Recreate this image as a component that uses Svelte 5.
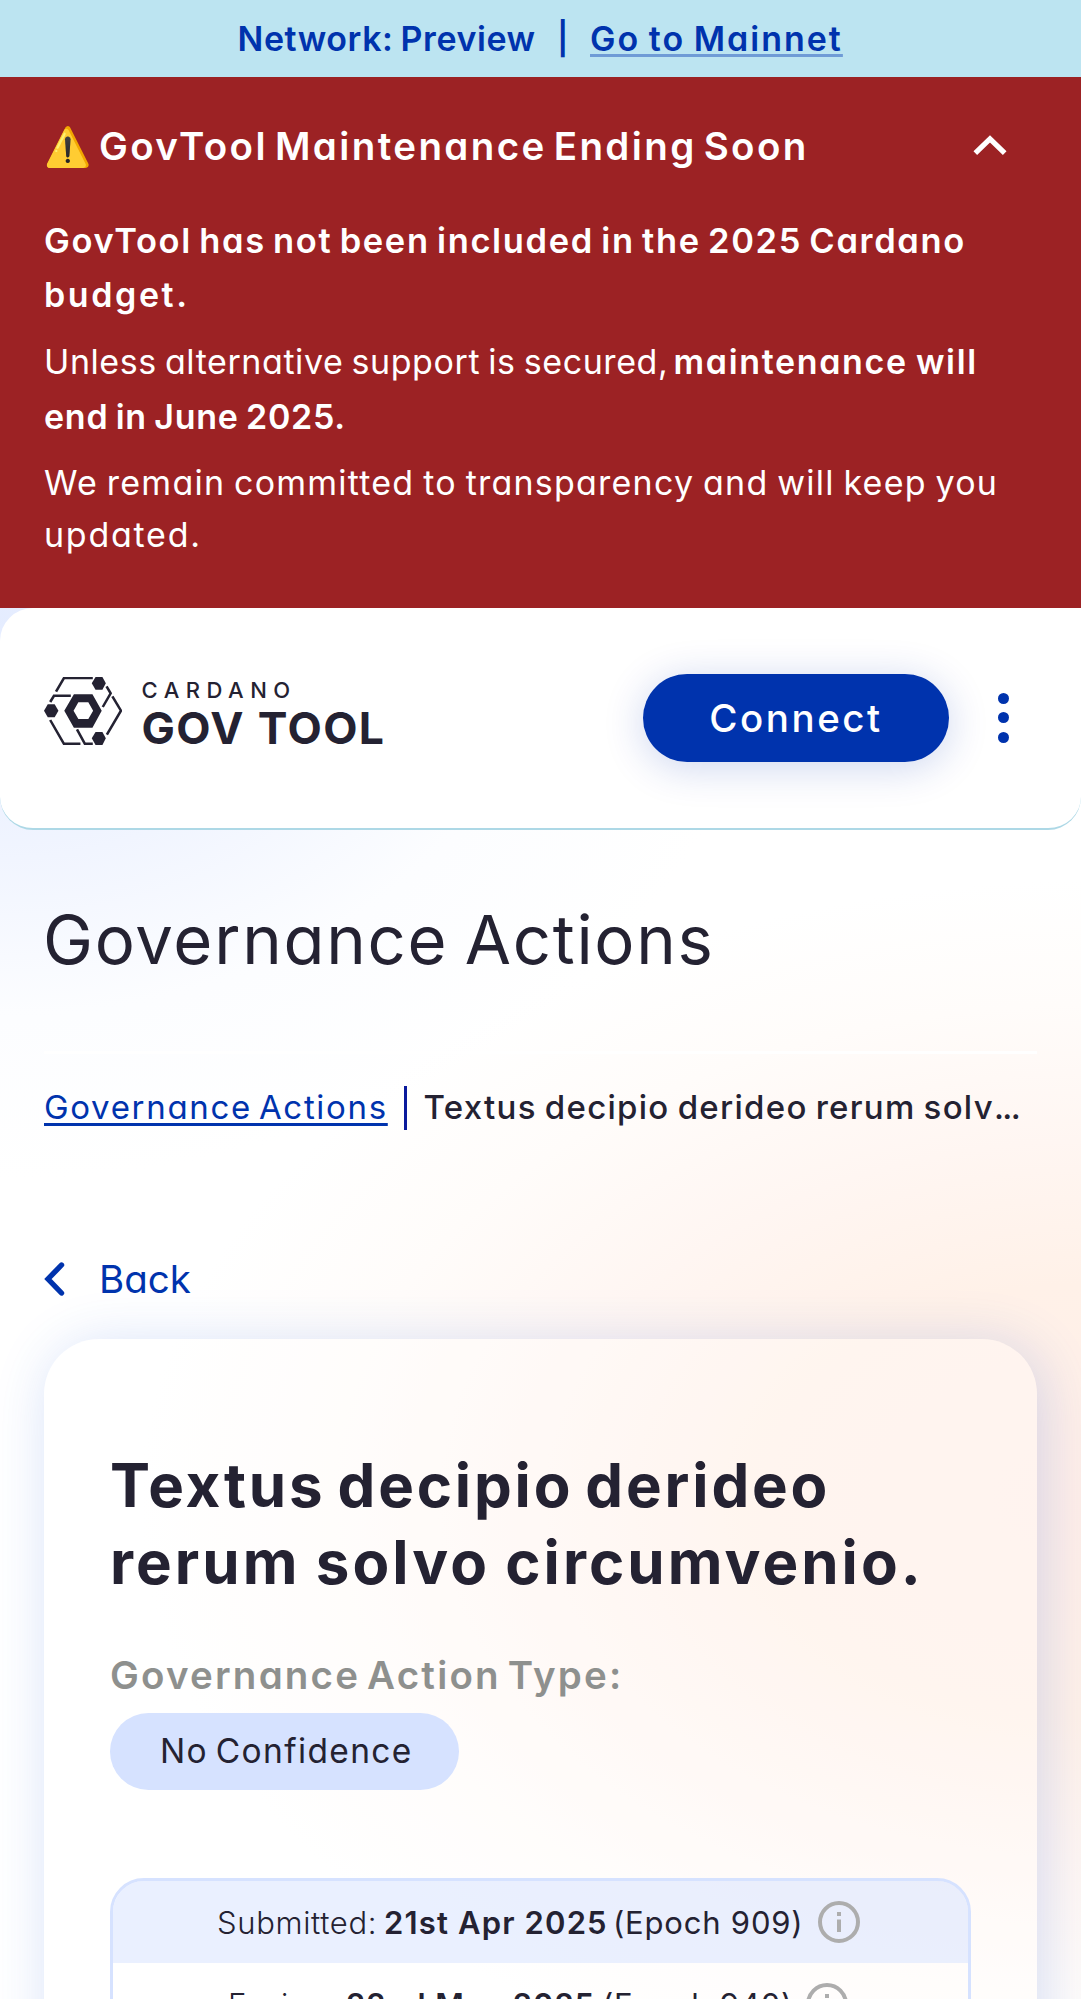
<script>
  const rows = [
    { label: 'Submitted:', date: '21st Apr 2025', epoch: '(Epoch 909)', kind: 'submitted' },
    { label: 'Expires:', date: '22nd May 2025', epoch: '(Epoch 940)', kind: 'expires' }
  ];
</script>

<div class="app">
  <div class="network">
    <span class="net-name">Network: Preview</span>
    <span class="net-sep">|</span>
    <a class="net-link" href="#mainnet">Go to Mainnet</a>
  </div>

  <section class="alert">
    <div class="alert-head">
      <span class="emoji">⚠️</span>
      <h2>GovTool Maintenance Ending Soon</h2>
      <svg class="chev-up" viewBox="0 0 34 21"><path d="M2.3 18.2 17 3.8l14.7 14.4" /></svg>
    </div>
    <p class="p1">
      <b class="a1">GovTool has not been included in the 2025 Cardano</b><br />
      <b class="a2">budget.</b>
    </p>
    <p class="p2">
      <span class="a3">Unless alternative support is secured,</span><b class="a4">maintenance will</b><br />
      <b class="a5">end in June 2025.</b>
    </p>
    <p class="p3">
      <span class="a6">We remain committed to transparency and will keep you</span><br />
      <span class="a7">updated.</span>
    </p>
  </section>

  <header>
    <div class="logo">
      <svg class="mark" viewBox="128 231 227 204" preserveAspectRatio="none">
        <path
          class="solid"
          fill-rule="evenodd"
          d="M187 332 215 283H269L296 332 269 383H215ZM214 332 228 357H257L271 332 257 307H228Z"
        />
        <path class="solid" d="M267 250 278 231H298L308 250 298 269H278Z" />
        <path class="solid" d="M128 332 139 313H159L170 332 159 352H139Z" />
        <path class="solid" d="M267 415 278 396H298L308 415 298 435H278Z" />
        <path
          class="line"
          d="M163 275 186 234.3H270M146 306 157 287.5H206M146 360 186 431.5H234M224 388 247 431.5H270M310 259 322 280 299 321M327 289 352 332 311 404"
        />
      </svg>
      <div class="logo-text">
        <span class="logo-top">CARDANO</span>
        <span class="logo-bottom">GOV TOOL</span>
      </div>
    </div>
    <div class="actions">
      <button class="connect">Connect</button>
      <div class="dots"><i></i><i></i><i></i></div>
    </div>
  </header>

  <main>
    <h1>Governance Actions</h1>
    <div class="divider"></div>
    <nav class="crumbs">
      <a href="#actions">Governance Actions</a>
      <span class="bar"></span>
      <span class="current">Textus decipio derideo rerum solv<span class="dots3">...</span></span>
    </nav>
    <div class="back">
      <svg viewBox="0 0 21 34"><path d="M17.5 3 4 17l13.5 14" /></svg>
      <span>Back</span>
    </div>

    <article class="card">
      <h3>
        <span class="t1">Textus decipio derideo</span><br />
        <span class="t2">rerum solvo circumvenio.</span>
      </h3>
      <div class="type-label">Governance Action Type:</div>
      <div class="pill">No Confidence</div>
      <div class="dates">
        {#each rows as row}
          <div class="row {row.kind}">
            <span class="label">{row.label}</span>
            <b>{row.date}</b>
            <span class="epoch">{row.epoch}</span>
            <svg class="info" viewBox="0 0 42 42">
              <circle cx="21" cy="21" r="19" />
              <path d="M21 18.5V31M21 11v4" />
            </svg>
          </div>
        {/each}
      </div>
    </article>
  </main>
</div>

<style>
  :global(body) {
    margin: 0;
    background: #fff;
  }
  .app {
    width: 1081px;
    height: 1999px;
    overflow: hidden;
    font-family: Inter, 'Liberation Sans', sans-serif;
    font-feature-settings: 'cv11';
    font-kerning: normal;
    color: #242232;
    white-space: nowrap;
    background:
      radial-gradient(ellipse 760px 560px at 0 620px, rgba(224, 233, 255, 0.85), rgba(230, 237, 255, 0.6) 40%, rgba(246, 249, 255, 0.35) 70%, rgba(255, 255, 255, 0) 100%),
      radial-gradient(ellipse 960px 620px at 1100px 1500px, #ffeee8 0%, #fff1e8 35%, #fff6f2 58%, #fffcfa 80%, rgba(255, 255, 255, 0) 100%),
      #fff;
  }
  h1,
  h2,
  h3,
  p {
    margin: 0;
  }
  b {
    font-weight: 600;
  }

  .network {
    height: 77px;
    box-sizing: border-box;
    padding-left: 237.5px;
    display: flex;
    align-items: center;
    background: #bce4f1;
    color: #0033ad;
    font-size: 34px;
    font-weight: 600;
    line-height: 76px;
  }
  .net-name {
    width: 319.5px;
    letter-spacing: 0.56px;
    word-spacing: -2px;
  }
  .net-sep {
    width: 33px;
    font-size: 32px;
    line-height: 73px;
  }
  .net-link {
    color: inherit;
    letter-spacing: 2px;
    word-spacing: -2px;
    text-decoration: underline;
    text-decoration-color: #6f9bd6;
    text-decoration-thickness: 2.5px;
    text-underline-offset: 2.5px;
    text-decoration-skip-ink: none;
  }

  .alert {
    box-sizing: border-box;
    height: 530.5px;
    padding: 41.5px 74px 0 44px;
    background: #9c2224;
    color: #fff;
    font-size: 34px;
  }
  .alert-head {
    display: flex;
    align-items: center;
    height: 54px;
  }
  .emoji {
    width: 55px;
    font-size: 38px;
    line-height: 52px;
  }
  h2 {
    flex: 1;
    font-size: 38.5px;
    font-weight: 600;
    line-height: 54px;
    letter-spacing: 2.38px;
    word-spacing: -5px;
  }
  .chev-up {
    width: 34px;
    height: 21px;
    fill: none;
    stroke: #fff;
    stroke-width: 5.2;
  }
  .p1 {
    margin-top: 41.6px;
    line-height: 54px;
  }
  .p2 {
    margin-top: 12px;
    line-height: 55px;
  }
  .p3 {
    margin-top: 13px;
    line-height: 52px;
  }
  .a1 {
    font-size: 34.5px;
    letter-spacing: 1.64px;
    word-spacing: -3px;
  }
  .a2 {
    letter-spacing: 2.6px;
  }
  .a3 {
    display: inline-block;
    width: 629.5px;
    letter-spacing: 0.58px;
    word-spacing: -2px;
  }
  .a4 {
    letter-spacing: 1.65px;
    word-spacing: -2px;
  }
  .a5 {
    letter-spacing: 0.75px;
    word-spacing: -2px;
  }
  .a6 {
    letter-spacing: 1.23px;
    word-spacing: -2px;
  }
  .a7 {
    letter-spacing: 1.75px;
  }

  header {
    box-sizing: border-box;
    height: 222.5px;
    padding: 0 72.3px 0 44px;
    display: flex;
    align-items: center;
    justify-content: space-between;
    background: #fff;
    border-bottom: 2.5px solid #add8e6;
    border-radius: 33px;
  }
  .logo {
    display: flex;
    gap: 19.5px;
    margin-bottom: 5px;
  }
  .mark {
    width: 78px;
    height: 68px;
  }
  .solid {
    fill: #242232;
  }
  .line {
    fill: none;
    stroke: #242232;
    stroke-width: 7.4;
  }
  .logo-text {
    display: flex;
    flex-direction: column;
  }
  .logo-top {
    font-size: 22px;
    font-weight: 500;
    line-height: 26px;
    letter-spacing: 6.5px;
  }
  .logo-bottom {
    font-size: 44.5px;
    font-weight: 700;
    line-height: 50px;
    letter-spacing: 1.4px;
    word-spacing: 1px;
  }
  .actions {
    display: flex;
    align-items: center;
  }
  .connect {
    width: 305.5px;
    height: 88.5px;
    padding: 0;
    border: 0;
    border-radius: 45px;
    background: #0033ad;
    color: #fff;
    font: inherit;
    font-size: 38.5px;
    font-weight: 500;
    letter-spacing: 2.5px;
    box-shadow: 0 5.5px 42px rgba(0, 51, 173, 0.2);
  }
  .dots {
    margin-left: 49px;
    display: flex;
    flex-direction: column;
    gap: 8.4px;
  }
  .dots i {
    width: 11px;
    height: 11px;
    border-radius: 50%;
    background: #0033ad;
  }

  main {
    padding: 70px 44px 0;
  }
  h1 {
    margin-left: -1px;
    font-size: 67px;
    font-weight: 400;
    line-height: 80px;
    letter-spacing: 1.72px;
    word-spacing: -4px;
  }
  .divider {
    height: 3px;
    margin-top: 71px;
    background: #fff;
  }
  .crumbs {
    display: flex;
    margin-top: 32px;
    font-size: 33px;
    line-height: 42px;
  }
  .crumbs a {
    width: 344px;
    color: #0033ad;
    letter-spacing: 1.68px;
    word-spacing: -4px;
    text-decoration: underline;
    text-decoration-thickness: 2.5px;
    text-underline-offset: 3.5px;
    text-decoration-skip-ink: none;
  }
  .bar {
    width: 2.6px;
    height: 44px;
    margin: 0 17px 0 16px;
    background: #0a1a9c;
  }
  .current {
    font-weight: 500;
    letter-spacing: 1.28px;
    word-spacing: -2px;
  }
  .dots3 {
    letter-spacing: -1.6px;
  }
  .back {
    display: flex;
    align-items: center;
    height: 52px;
    margin-top: 123px;
    color: #0033ad;
    font-size: 38.5px;
    line-height: 52px;
    letter-spacing: 0;
  }
  .back svg {
    width: 21px;
    height: 34px;
    margin-right: 34px;
    fill: none;
    stroke: #0033ad;
    stroke-width: 5.4;
    stroke-linecap: round;
  }

  .card {
    height: 800px;
    margin-top: 34px;
    padding: 108px 66px 0;
    border-radius: 55px;
    background: rgba(255, 255, 255, 0.3);
    box-shadow: 5.5px 5.5px 55px rgba(47, 98, 220, 0.2);
  }
  h3 {
    font-size: 60px;
    font-weight: 700;
    line-height: 76.5px;
    word-spacing: -5px;
  }
  .t1 {
    letter-spacing: 2.83px;
  }
  .t2 {
    letter-spacing: 3.05px;
    word-spacing: -2px;
  }
  .type-label {
    margin-top: 49.8px;
    font-size: 38.5px;
    font-weight: 600;
    line-height: 50px;
    letter-spacing: 2.2px;
    word-spacing: -5px;
    color: #8e908e;
  }
  .pill {
    width: 349px;
    height: 77px;
    margin-top: 13.6px;
    box-sizing: border-box;
    padding-left: 50px;
    border-radius: 39px;
    background: #d6e2ff;
    font-size: 33.5px;
    line-height: 76px;
    letter-spacing: 1.35px;
    word-spacing: -3px;
  }
  .dates {
    margin-top: 88px;
    height: 300px;
    border: 3px solid #d6e2ff;
    border-radius: 34px;
    overflow: hidden;
  }
  .row {
    display: flex;
    align-items: center;
    height: 82px;
    font-size: 31px;
  }
  .submitted {
    padding-left: 104px;
    background: rgba(214, 226, 255, 0.5);
  }
  .expires {
    padding-left: 115px;
  }
  .label {
    width: 167px;
    font-weight: 300;
    letter-spacing: 0.65px;
  }
  .row b {
    width: 229px;
    letter-spacing: 1.15px;
  }
  .epoch {
    width: 205px;
    letter-spacing: 0.8px;
  }
  .expires .label {
    width: 118px;
    letter-spacing: -0.2px;
  }
  .expires b {
    width: 256px;
    letter-spacing: 0.9px;
  }
  .expires .epoch {
    width: 204px;
  }
  .info {
    width: 42px;
    height: 42px;
    fill: none;
    stroke: #adadad;
    stroke-width: 4;
  }
</style>
